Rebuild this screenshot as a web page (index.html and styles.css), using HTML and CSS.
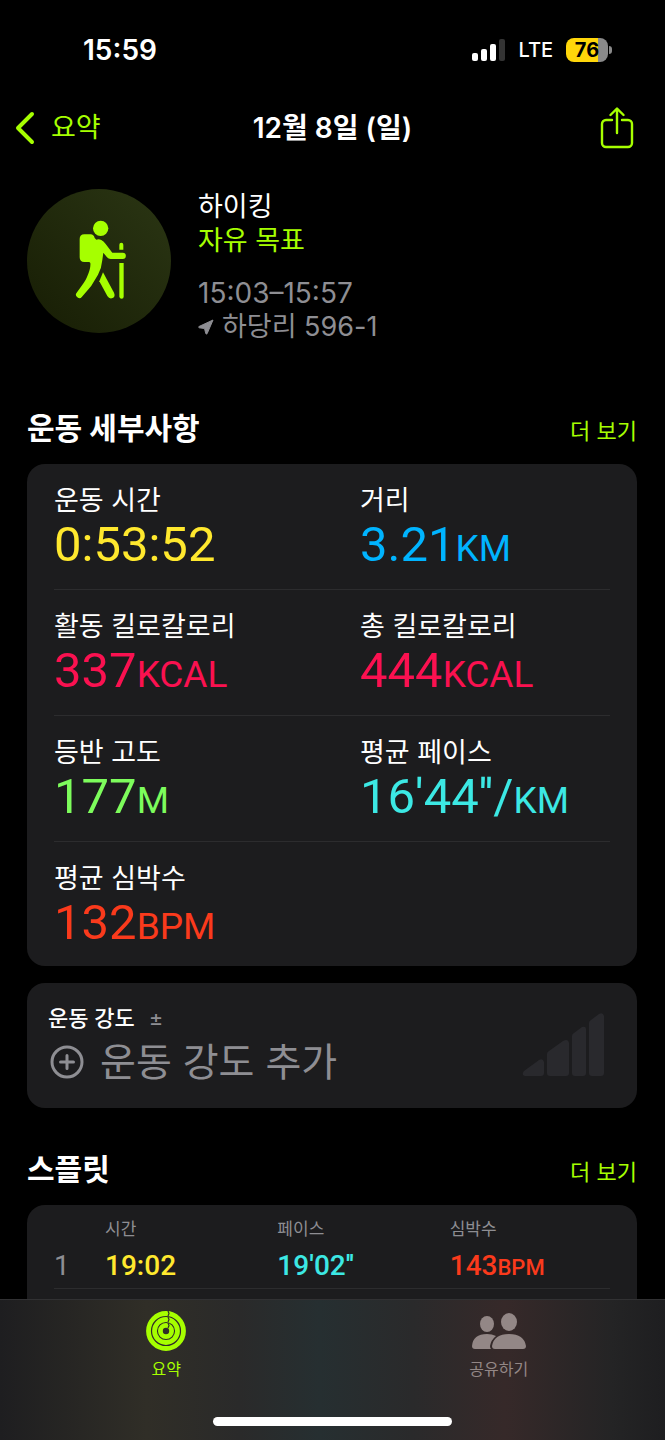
FILE: index.html
```html
<!doctype html>
<html lang="ko">
  <head>
    <meta charset="UTF-8" />
    <meta name="viewport" content="width=device-width, initial-scale=1.0" />
    <title>하이킹</title>
    <link rel="stylesheet" href="styles.css">
  </head>

  <body>
    <div class="statusBar">
      <span class="clock">15:59</span>
      <div class="statusIcons">
        <svg class="signal" width="33" height="22" viewBox="0 0 33 22" aria-hidden="true">
          <rect x="0" y="14" width="6" height="8" rx="2" fill="#fff" />
          <rect x="9" y="10" width="6" height="12" rx="2" fill="#fff" />
          <rect x="18" y="5" width="6" height="17" rx="2" fill="#fff" />
          <rect x="27" y="0" width="6" height="22" rx="2" fill="#333" />
        </svg>
        <span class="network">LTE</span>
        <span class="battery">76</span>
      </div>
    </div>

    <header class="navBar">
      <a class="back" href="#">
        <svg width="20" height="34" viewBox="0 0 20 34" aria-hidden="true">
          <path d="M17 3 3 17l14 14" fill="none" stroke="currentColor" stroke-width="4" stroke-linecap="round" stroke-linejoin="round" />
        </svg>
        요약
      </a>
      <h1 class="navTitle">12월 8일 (일)</h1>
      <button class="share" type="button" aria-label="공유">
        <svg width="34" height="42" viewBox="0 0 34 42" aria-hidden="true">
          <path d="M12 13H6a4 4 0 0 0-4 4v19a4 4 0 0 0 4 4h22a4 4 0 0 0 4-4V17a4 4 0 0 0-4-4h-6M17 26V2M10.500 8 17 1.500 23.500 8" fill="none" stroke="currentColor" stroke-width="2.400" stroke-linecap="round" stroke-linejoin="round" />
        </svg>
      </button>
    </header>

    <main class="content">
      <section class="summary">
        <svg class="hiker" viewBox="22 27 432 432" aria-hidden="true">
          <defs>
            <linearGradient id="disc" x1="0" y1="1" x2="1" y2="0">
              <stop offset="0" stop-color="#171d04" />
              <stop offset="1" stop-color="#2b3614" />
            </linearGradient>
          </defs>
          <circle cx="238" cy="243" r="216" fill="url(#disc)" />
          <g fill="#a6ff00">
            <circle cx="243" cy="145" r="23" />
            <path d="M194 163h19q9 0 12 11l5 5q7-3 15 1 8 4 13 12l20 26h31a9 9 0 0 1 0 19h-36q-7 0-11-5l-11-14-3 22q-2 24-13 44l-15 25q-5 10-13 18l-20 23a10 10 0 0 1-16-12l21-29q6-8 10-18 12-26 10-42l-3-3h-15q-14 0-14-14v-55q0-14 14-14z" />
            <path d="M250 277l33 61q5 12-4 16-10 4-16-6l-24-44z" />
            <path d="M299 209v-15q0-6 6-6t6 6v15zM299 249h13v101q0 6-6 6t-7-6z" />
          </g>
        </svg>
        <div class="summaryText">
          <div class="activity">하이킹</div>
          <div class="goal">자유 목표</div>
          <div class="period">15:03–15:57</div>
          <div class="place">
            <svg width="16" height="16" viewBox="0 0 16 16" aria-hidden="true">
              <path d="M15 1 1 7.500q-1 .8.300 1.300L6.500 9.500 7.800 14.500q.6 1.200 1.300.2z" fill="currentColor" stroke="currentColor" stroke-linejoin="round" />
            </svg>
            하당리 596-1
          </div>
        </div>
      </section>

      <section>
        <div class="sectionHead">
          <h2>운동 세부사항</h2>
          <a href="#">더 보기</a>
        </div>
        <div class="card details">
          <div class="metricRow">
            <div class="metric"><h3>운동 시간</h3><p class="yellow">0:53:52</p></div>
            <div class="metric"><h3>거리</h3><p class="blue">3.21<small>KM</small></p></div>
          </div>
          <div class="metricRow">
            <div class="metric"><h3>활동 킬로칼로리</h3><p class="pink">337<small>KCAL</small></p></div>
            <div class="metric"><h3>총 킬로칼로리</h3><p class="pink">444<small>KCAL</small></p></div>
          </div>
          <div class="metricRow">
            <div class="metric"><h3>등반 고도</h3><p class="green">177<small>M</small></p></div>
            <div class="metric"><h3>평균 페이스</h3><p class="cyan">16'44''/<small>KM</small></p></div>
          </div>
          <div class="metricRow">
            <div class="metric"><h3>평균 심박수</h3><p class="red">132<small>BPM</small></p></div>
          </div>
        </div>
      </section>

      <section class="card effort">
        <div>
          <h3>운동 강도 <span class="plusMinus">±</span></h3>
          <button class="addEffort" type="button">
            <svg width="34" height="34" viewBox="0 0 34 34" aria-hidden="true">
              <g fill="none" stroke="currentColor" stroke-width="3" stroke-linecap="round">
                <circle cx="17" cy="17" r="15" />
                <path d="M17 10.500v13M10.500 17h13" />
              </g>
            </svg>
            운동 강도 추가
          </button>
        </div>
        <svg class="effortBars" width="82" height="64" viewBox="0 0 82 64" aria-hidden="true">
          <path d="M2 58 17 47q4-2 5 2v11q0 3-3 3H3q-4-1-1-5zM25 41q0-2 2-3l14-10q5-3 6 2v30q0 3-3 3H28q-3 0-3-3zM50 23q0-2 2-3l8-6q4-1 4 2v44q0 3-3 3h-8q-3 0-3-3zM67 10q0-2 2-3l8-6q4-2 5 2v57q0 3-3 3h-9q-3 0-3-3z" fill="#29292d" />
        </svg>
      </section>

      <section class="splits">
        <div class="sectionHead">
          <h2>스플릿</h2>
          <a href="#">더 보기</a>
        </div>
        <div class="card splitCard">
          <table class="splitTable">
            <thead>
              <tr><th class="lap"></th><th class="wide">시간</th><th class="wide">페이스</th><th>심박수</th></tr>
            </thead>
            <tbody>
              <tr>
                <td class="lap">1</td>
                <td class="yellow">19:02</td>
                <td class="cyan">19'02''</td>
                <td class="red">143<small>BPM</small></td>
              </tr>
            </tbody>
          </table>
        </div>
      </section>
    </main>

    <footer class="tabBar">
      <nav class="tabs">
        <a class="tab active" href="#">
          <svg width="40" height="40" viewBox="0 0 40 40" aria-hidden="true">
            <g fill="none" stroke="currentColor" stroke-width="4.800">
              <circle cx="20" cy="20" r="17.500" />
              <circle cx="20" cy="20" r="11.500" />
              <circle cx="20" cy="20" r="5.600" />
            </g>
            <path d="M22 0l1 2.500L22 5M22 6l1 2.500L22 11M22 12l1 2.500L22 17" fill="none" stroke="#2f2e27" stroke-width="1.200" />
          </svg>
          요약
        </a>
        <a class="tab" href="#">
          <svg width="54" height="40" viewBox="0 0 54 40" aria-hidden="true">
            <g fill="currentColor">
              <ellipse cx="15" cy="13" rx="7" ry="8" />
              <ellipse cx="37" cy="11" rx="8" ry="9" />
              <path d="M3 38q-3 0-3-3 1-12 15-12 5 0 9 2-5 4-6 10 0 2 1 3zM23 38q-3 0-3-3 2-12 17-12t17 12q0 3-3 3z" />
            </g>
          </svg>
          공유하기
        </a>
      </nav>
      <div class="homeIndicator"></div>
    </footer>
  </body>
</html>
```
FILE: styles.css
```css
* {
  box-sizing: border-box;
}

body {
  --accent: #a6ff00;
  --gray: #8e8e93;
  display: flex;
  flex-direction: column;
  min-height: 100vh;
  margin: 0;
  background: #000;
  color: #fff;
  font-family: Inter, "Noto Sans CJK KR", sans-serif;
  font-size: 27px;
  line-height: 34px;
}

h1, h2, h3, p {
  margin: 0;
  font-weight: 400;
}

h3 {
  font-size: inherit;
}

a {
  color: var(--accent);
  text-decoration: none;
}

button {
  padding: 0;
  border: 0;
  background: none;
  color: inherit;
  font: inherit;
  cursor: pointer;
}

small {
  line-height: 1;
}

svg {
  display: block;
  flex-shrink: 0;
}

.yellow { color: #ffe82e; }
.blue { color: #00b4ff; }
.pink { color: #fa1150; }
.green { color: #7dfc5c; }
.cyan { color: #3ce8e4; }
.red { color: #fa3a1c; }

/* status bar */
.statusBar {
  display: flex;
  align-items: center;
  justify-content: space-between;
  height: 100px;
  padding: 0 57px 0 83px;
}

.clock {
  font-size: 28px;
  font-weight: 600;
}

.statusIcons {
  display: flex;
  align-items: center;
  gap: 13px;
}

.network {
  font-size: 20px;
  font-weight: 500;
}

.battery {
  position: relative;
  width: 42px;
  height: 24px;
  border-radius: 8px;
  background: linear-gradient(to right, #ffd60a 76%, #8a8a8a 76%);
  color: #000;
  font-size: 20px;
  font-weight: 700;
  line-height: 24px;
  text-align: center;
}

.battery::after {
  content: "";
  position: absolute;
  top: 8px;
  right: -4px;
  width: 3px;
  height: 8px;
  border-radius: 0 4px 4px 0;
  background: #8a8a8a;
}

/* navigation */
.navBar {
  display: grid;
  grid-template-columns: 1fr auto 1fr;
  align-items: center;
  height: 56px;
  padding: 0 31px;
}

.back {
  display: flex;
  align-items: center;
  gap: 16px;
  margin-left: -16px;
}

.navTitle {
  font-size: 28px;
  font-weight: 600;
}

.share {
  justify-self: end;
  color: var(--accent);
}

.content {
  display: flex;
  flex: 1;
  flex-direction: column;
  padding: 33px 28px 0 27px;
}

/* workout summary */
.summary {
  display: flex;
  gap: 27px;
  margin-bottom: 62px;
}

.hiker {
  width: 144px;
  height: 144px;
}

.summaryText {
  padding-top: 1px;
}

.goal {
  margin-bottom: 18px;
  color: var(--accent);
}

.period,
.place {
  color: var(--gray);
}

.period {
  font-size: 28px;
}

.place {
  display: flex;
  align-items: center;
  gap: 8px;
}

.sectionHead {
  display: flex;
  align-items: center;
  justify-content: space-between;
  padding-bottom: 14px;
}

.sectionHead h2 {
  font-size: 30px;
  font-weight: 700;
  line-height: 44px;
}

.sectionHead a {
  padding-top: 6px;
  font-size: 22px;
}

.card {
  border-radius: 18px;
  background: #1c1c1e;
}

/* metrics */
.details {
  padding: 0 27px;
}

.metricRow {
  display: grid;
  grid-template-columns: 1fr 1fr;
  gap: 56px;
  padding: 20px 0 17px;
  border-bottom: 1px solid #2c2c2e;
}

.metricRow:last-child {
  padding-bottom: 16px;
  border-bottom: 0;
}

.metric {
  white-space: nowrap;
}

.metric p {
  font-family: Roboto, sans-serif;
  font-size: 49px;
  line-height: 54px;
}

.metric small {
  font-size: 37px;
}

/* effort */
.effort {
  display: flex;
  align-items: center;
  justify-content: space-between;
  margin: 17px 0 39px;
  padding: 18px 33px 19px 21px;
}

.effort h3 {
  font-size: 22px;
  font-weight: 500;
}

.plusMinus {
  margin-left: 8px;
  color: var(--gray);
  font-weight: 400;
}

.addEffort {
  display: flex;
  align-items: center;
  gap: 16px;
  padding-left: 2px;
  color: var(--gray);
  font-size: 39px;
  line-height: 54px;
}

/* splits */
.splits {
  display: flex;
  flex: 1;
  flex-direction: column;
}

.splitCard {
  flex: 1;
  padding: 8px 27px 0;
  border-radius: 18px 18px 0 0;
}

.splitTable {
  width: 100%;
  border-collapse: collapse;
  table-layout: fixed;
  text-align: left;
}

.splitTable th {
  padding: 0;
  color: var(--gray);
  font-size: 17px;
  font-weight: 400;
  line-height: 32px;
}

.splitTable td {
  padding: 3px 0 4px;
  border-bottom: 1px solid #2c2c2e;
  font-family: Roboto, sans-serif;
  font-size: 28px;
  font-weight: 500;
  line-height: 36px;
}

.splitTable small {
  font-size: 22px;
}

.splitTable .lap {
  width: 51px;
  color: var(--gray);
  font-weight: 400;
}

.splitTable .wide {
  width: 31%;
}

/* tab bar */
.tabBar {
  padding: 11px 0 14px;
  border-top: 1px solid #313133;
  background: linear-gradient(to right, #1e1e20, #302e27 22%, #2a2a2a 36%, #262f31 48%, #2a2a2b 62%, #362929 76%, #242425 92%, #1e1e20);
}

.tabs {
  display: grid;
  grid-template-columns: 1fr 1fr;
}

.tab {
  display: flex;
  flex-direction: column;
  align-items: center;
  gap: 6px;
  color: #938786;
  font-size: 16px;
  line-height: 24px;
}

.tab.active {
  color: var(--accent);
}

.homeIndicator {
  width: 36%;
  height: 9px;
  margin: 36px auto 0;
  border-radius: 5px;
  background: #fff;
}
```
